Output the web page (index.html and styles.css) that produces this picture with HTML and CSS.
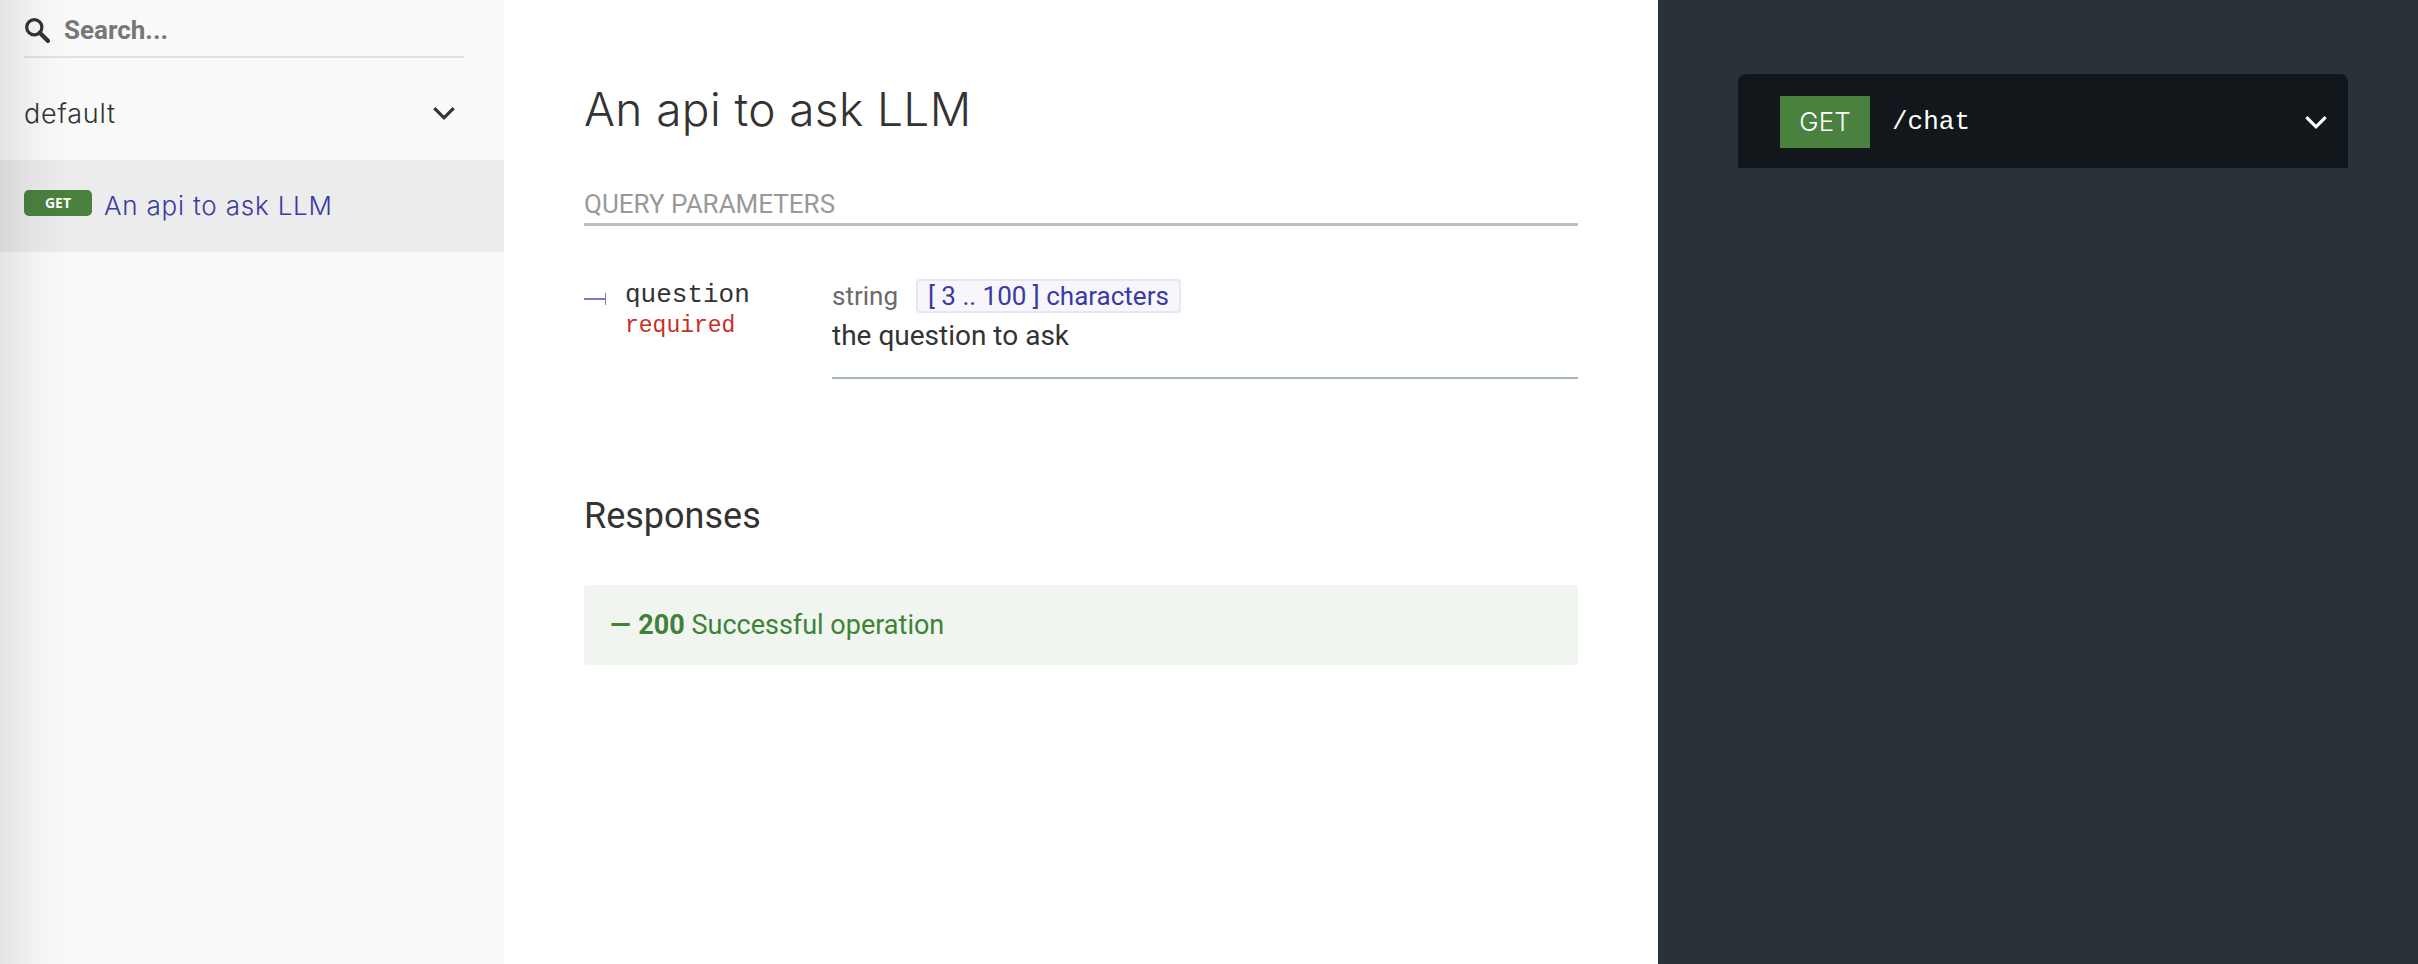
FILE: index.html
```html
<!DOCTYPE html>
<html lang="en">
  <head>
    <meta charset="UTF-8" />
    <title>An api to ask LLM</title>
    <link rel="stylesheet" href="styles.css">
  </head>

  <body>
    <!-- Left menu -->
    <aside class="sidebar">
      <div class="search">
        <svg class="search-icon" viewBox="0 0 24 24" width="26" height="26">
          <circle cx="9.5" cy="9.5" r="7" fill="none" stroke="#333" stroke-width="3" />
          <line x1="14.5" y1="14.5" x2="22" y2="22" stroke="#333" stroke-width="4" stroke-linecap="round" />
        </svg>
        <span class="search-text">Search...</span>
      </div>

      <div class="group">
        <span>default</span>
        <svg viewBox="0 0 22 14" width="24" height="15">
          <polyline points="2,2 11,11 20,2" fill="none" stroke="#333" stroke-width="3" />
        </svg>
      </div>

      <div class="menu-item">
        <span class="method-tag">GET</span>
        <span class="menu-label">An api to ask LLM</span>
      </div>
    </aside>

    <!-- Operation description -->
    <main class="content">
      <h1>An api to ask LLM</h1>

      <h5 class="params-title">Query Parameters</h5>

      <div class="param">
        <div class="param-name">
          <span class="param-tick"></span>
          <div>
            <div class="param-key">question</div>
            <div class="param-required">required</div>
          </div>
        </div>
        <div class="param-info">
          <div class="param-type">
            <span>string</span>
            <span class="param-limit">[ 3 .. 100 ] characters</span>
          </div>
          <p>the question to ask</p>
        </div>
      </div>

      <h3>Responses</h3>

      <div class="response"><b class="response-dash">&mdash;</b> <b>200</b> Successful operation</div>
    </main>

    <!-- Right panel -->
    <section class="panel">
      <div class="endpoint">
        <span class="endpoint-method">GET</span>
        <span class="endpoint-path">/chat</span>
        <svg viewBox="0 0 22 14" width="24" height="15">
          <polyline points="2,2 11,11 20,2" fill="none" stroke="#fff" stroke-width="3" />
        </svg>
      </div>
    </section>
  </body>
</html>
```

FILE: styles.css
```css
* {
  box-sizing: border-box;
}

html,
body {
  height: 100%;
}

body {
  display: flex;
  margin: 0;
  overflow: hidden;
  background-color: white;
  font-family: Roboto, sans-serif;
  color: #333;
}

.sidebar {
  position: relative;
  width: 504px;
  flex-shrink: 0;
  background-color: #fafafa;
}

/* Shadow along the left edge, it also covers the active row */
.sidebar::before {
  content: "";
  position: absolute;
  top: 0;
  bottom: 0;
  left: 0;
  width: 70px;
  background: linear-gradient(to right, rgba(0, 0, 0, 0.09), rgba(0, 0, 0, 0.03) 50%, rgba(0, 0, 0, 0));
}

.search {
  display: flex;
  align-items: center;
  gap: 14px;
  height: 58px;
  margin: 0 40px 0 24px;
  padding-top: 4px;
  border-bottom: 2px solid #e1e1e1;
}

.search-text {
  font-size: 26px;
  font-weight: 700;
  color: #777;
}

.group {
  display: flex;
  align-items: center;
  justify-content: space-between;
  height: 102px;
  padding: 8px 48px 0 24px;
  font-family: Inter, sans-serif;
  font-size: 27px;
  font-weight: 300;
  letter-spacing: 0.8px;
}

.menu-item {
  display: flex;
  align-items: center;
  gap: 12px;
  height: 92px;
  padding-left: 24px;
  background-color: #ececec;
}

.method-tag {
  width: 68px;
  height: 26px;
  margin-bottom: 6px;
  border-radius: 5px;
  background-color: #4a813e;
  color: white;
  font-family: "Open Sans", sans-serif;
  font-size: 14px;
  font-weight: 700;
  line-height: 26px;
  text-align: center;
}

.menu-label {
  margin-bottom: 2px;
  font-family: Inter, sans-serif;
  font-size: 26px;
  font-weight: 300;
  letter-spacing: 0.8px;
  color: #3a3aa3;
}

.content {
  width: 1154px;
  flex-shrink: 0;
  padding: 0 80px;
}

h1 {
  margin: 82px 0 0;
  font-family: Inter, sans-serif;
  font-size: 46px;
  font-weight: 300;
  letter-spacing: 0.4px;
  line-height: 54px;
}

.params-title {
  margin: 52px 0 0;
  padding-bottom: 3px;
  border-bottom: 3px solid #bcc0c4;
  color: #999;
  font-size: 26px;
  font-weight: 400;
  line-height: 32px;
  text-transform: uppercase;
}

.param {
  display: flex;
  margin-top: 53px;
}

.param-name {
  display: flex;
  width: 248px;
  flex-shrink: 0;
}

.param-tick {
  width: 22px;
  height: 12px;
  margin: 14px 19px 0 0;
  border-right: 1px solid #7c7cb8;
  background: linear-gradient(#7c7cb8, #7c7cb8) left center / 100% 2px no-repeat;
}

.param-key {
  font-family: "Liberation Mono", monospace;
  font-size: 26px;
  line-height: 32px;
}

.param-required {
  font-family: "Liberation Mono", monospace;
  font-size: 23px;
  line-height: 30px;
  color: #c62e28;
}

.param-info {
  flex-grow: 1;
  padding-bottom: 22px;
  border-bottom: 2px solid #a4b5bf;
}

.param-type {
  display: flex;
  align-items: center;
  gap: 18px;
  font-size: 26px;
  color: #6b6b6b;
}

.param-limit {
  padding: 0 10px;
  border: 2px solid #e6e6f4;
  border-radius: 4px;
  background-color: #f6f6fb;
  color: #3a3aa3;
  line-height: 30px;
}

.param-info p {
  margin: 4px 0 0;
  font-size: 28px;
  line-height: 38px;
}

h3 {
  margin: 114px 0 0;
  font-size: 36px;
  font-weight: 400;
  line-height: 46px;
}

.response {
  margin-top: 46px;
  padding: 0 26px;
  border-radius: 4px;
  background-color: #f0f5f0;
  color: #3f8236;
  font-size: 27px;
  line-height: 80px;
}

.response-dash {
  letter-spacing: 1px;
}

.panel {
  flex-grow: 1;
  padding: 74px 70px 0 80px;
  background-color: #2a3239;
}

.endpoint {
  display: flex;
  align-items: center;
  height: 94px;
  padding: 2px 20px 0 42px;
  border-radius: 8px 8px 0 0;
  background-color: #11171a;
  color: white;
}

.endpoint-method {
  width: 90px;
  height: 52px;
  background-color: #4a813e;
  font-family: Inter, sans-serif;
  font-size: 26px;
  font-weight: 300;
  line-height: 52px;
  text-align: center;
}

.endpoint-path {
  flex-grow: 1;
  margin-left: 22px;
  font-family: "Liberation Mono", monospace;
  font-size: 26px;
}
```
